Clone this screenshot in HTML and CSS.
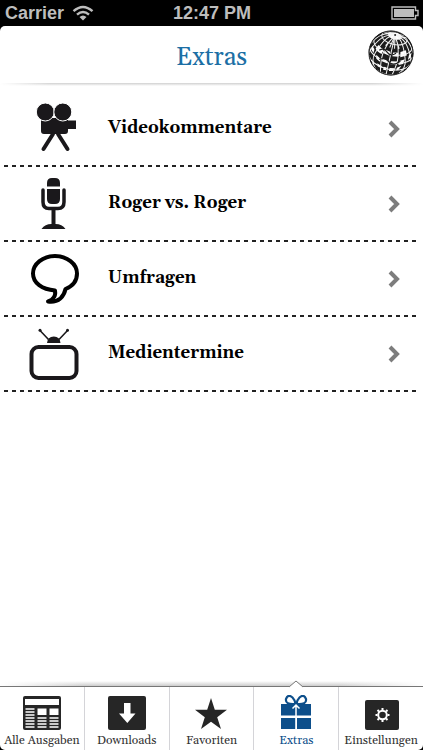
FILE: index.html
```
<!DOCTYPE html>
<html lang="de">

  <head>
    <meta charset="utf-8">
    <meta name="viewport" content="width=device-width, initial-scale=1">
    <title>Extras</title>
    <link rel="stylesheet" href="styles.css">
  </head>

  <body>
    <div class="status">
      <div class="carrier">
        <span>Carrier</span>
        <svg width="22" height="16" viewBox="0 0 22 16" fill="none" stroke="#bdbdbd" stroke-width="2.4">
          <path d="M1.500 6.200Q11-2.400 20.500 6.200"/>
          <path d="M5 9.600Q11 4.200 17 9.600"/>
          <path d="M7.500 12Q11 9 14.500 12L11 15.600z" fill="#bdbdbd" stroke="none"/>
        </svg>
      </div>
      <span class="time">12:47 PM</span>
      <svg class="battery" width="28" height="14" viewBox="0 0 28 14">
        <path d="M1 1H24.500V4.500H27V9.500H24.500V13H1z" fill="none" stroke="#bdbdbd" stroke-width="1.400"/>
        <rect x="3" y="3" width="20" height="8" fill="#bdbdbd"/>
      </svg>
    </div>

    <div class="app">
      <header class="header">
        <h1>Extras</h1>
        <svg class="globe" width="46" height="46" viewBox="-23 -23 46 46">
          <circle r="22.500" fill="#1c1c1c"/>
          <g transform="rotate(13)" fill="none" stroke="#f4f4f4">
            <!-- openings between the bars -->
            <g stroke="none" fill="#fff">
              <path d="M-14-5q4 3 6 3l-1 5q-5-1-7-4zM-6-2l5 1v4l-6-1zM2-1l5-1 1 4-6 1zM9-3l5-3 2 5-6 3zM-14 5l5 3v3l-4-2zM-7 7l6 1v3l-6-1zM2 8l6-1v3l-6 1zM10 6l5-3-1 5-4 2zM-11 13l5 2v2l-4-1zM-4 15h3v3h-3zM2 15l5-1-1 3-4 1zM9 13l4-3-2 5-2 1zM-20-3l3 3v4l-3-3zM18-2l2-3v5l-2 3z"/>
              <ellipse cy="-17.500" rx="7" ry="3.500"/>
            </g>
            <g stroke-width="1">
              <ellipse cy="-15.600" rx="12.900" ry="6.700"/>
              <path d="M-19.500-9A19.500 10.200 0 0 0 19.500-9M-22.200-1A22.300 11.600 0 0 0 22.200-1M-20.800 7A21 10.900 0 0 0 20.800 7M-15.900 13.500A15.900 8.300 0 0 0 15.900 13.500"/>
              <path d="M0-19V22M0-19Q6-16 9.100-10.900T15.300 3.100T11.200 19.400M0-19Q8-17 11.900-13T20-.5T18.800 12M0-19Q8-19 12.900-15.600T21.700-4.900M0-19L11.900-18.200M0-19L9-20.300"/>
              <path d="M0-19Q-6-16-9.100-10.900T-15.300 3.100T-11.200 19.400M0-19Q-8-17-11.900-13T-20-.5T-18.800 12M0-19Q-8-19-12.900-15.600T-21.700-4.900M0-19L-11.900-18.200M0-19L-9-20.300"/>
              <path d="M0-18L4.800-9.400Q8 0 8 6T6 21M0-18L-4.800-9.400Q-8 0-8 6T-6 21M0-18L2.500-5M0-18L-2.500-5M0-18L7-6M0-18L-7-6"/>
            </g>
            <path d="M-12 0Q-8-4-4 0T5-1M-10 9Q-5 5 0 9T11 6" stroke="#1c1c1c" stroke-width="1.200"/>
            <circle cy="-18.400" r="1" fill="#222" stroke="none"/>
          </g>
          <circle r="22" fill="none" stroke="#161616" stroke-width="1"/>
        </svg>
      </header>

      <main class="list">
        <a class="row" href="#">
          <svg class="icon" width="52" height="52" viewBox="0 0 52 52" fill="#1a181b">
            <path d="M13 15H40V17.500H48V26H40V28Q40 31 37 31H16Q13 31 13 28z"/>
            <circle cx="17.300" cy="9" r="9" stroke="#fff"/>
            <circle cx="34.800" cy="9" r="9" stroke="#fff"/>
            <path d="M25 31L15.500 46M30 31L39.500 46" stroke="#1a181b" stroke-width="4" stroke-linecap="round"/>
          </svg>
          <span class="title">Videokommentare</span>
          <svg class="arrow" width="14" height="20" viewBox="0 0 14 20"><path d="M3 3L10 10L3 17"/></svg>
        </a>
        <a class="row" href="#">
          <svg class="icon" width="52" height="52" viewBox="0 0 52 52" fill="#1a181b">
            <path d="M19 8.500V5Q19 0 24 0H27Q32 0 32 5V8.500zM19 11H32V21Q32 26 27 26H24Q19 26 19 21z"/>
            <path d="M15 12V24Q15 30.500 21 30.500H30Q36 30.500 36 24V12" fill="none" stroke="#1a181b" stroke-width="3.500" stroke-linecap="round"/>
            <path d="M23.500 31H27.500V46Q34 46 37.500 51H13.500Q17 46 23.500 46z"/>
          </svg>
          <span class="title">Roger vs. Roger</span>
          <svg class="arrow" width="14" height="20" viewBox="0 0 14 20"><path d="M3 3L10 10L3 17"/></svg>
        </a>
        <a class="row" href="#">
          <svg class="icon" width="52" height="52" viewBox="0 0 52 52" fill="none" stroke="#000" stroke-width="4" stroke-linejoin="round">
            <path d="M27 3C15 3 5 11 5 20.500C5 30 14 36.500 27 37.500C28 43 25 47 20 48.500C31 50 36 43 37.500 36C45 33 49 27 49 20.500C49 11 39 3 27 3z"/>
          </svg>
          <span class="title">Umfragen</span>
          <svg class="arrow" width="14" height="20" viewBox="0 0 14 20"><path d="M3 3L10 10L3 17"/></svg>
        </a>
        <a class="row" href="#">
          <svg class="icon" width="52" height="52" viewBox="0 0 52 52" fill="#1a181b">
            <path d="M12 2.500L20.500 11.500M39.500 2.500L31 11.500" stroke="#1a181b" stroke-width="1.600"/>
            <circle cx="12" cy="2.300" r="1.500"/>
            <circle cx="39.500" cy="2.300" r="1.500"/>
            <path d="M19 15Q19.500 8.500 25.800 8.500T32.500 15z"/>
            <rect x="3.500" y="19" width="45" height="31" rx="7" fill="none" stroke="#1a181b" stroke-width="4"/>
          </svg>
          <span class="title">Medientermine</span>
          <svg class="arrow" width="14" height="20" viewBox="0 0 14 20"><path d="M3 3L10 10L3 17"/></svg>
        </a>
      </main>

      <nav class="tabs">
        <a class="tab" href="#">
          <svg width="40" height="36" viewBox="0 0 40 36">
            <rect x="1" y="1" width="38" height="34" rx="2" fill="#262626"/>
            <path d="M3 4H37V10H3zM15.500 13.500H24.500V20H15.500zM27.500 13.500H36.500V20H27.500z" fill="#fff"/>
            <path d="M3.500 14H12.500M3.500 17H12.500M3.500 20H12.500M3.500 23H12.500M3.500 26H12.500M3.500 29H12.500M3.500 32H12.500M15.500 23H24.500M15.500 26H24.500M15.500 29H24.500M15.500 32H24.500M27.500 23H36.500M27.500 26H36.500M27.500 29H36.500M27.500 32H36.500" stroke="#fff" stroke-width="1.700"/>
          </svg>
          <span>Alle Ausgaben</span>
        </a>
        <a class="tab" href="#">
          <svg width="40" height="36" viewBox="0 0 40 36">
            <rect x="1" y="1" width="38" height="34" rx="2" fill="#262626"/>
            <path d="M17 8H23.500V18.500H28.500L20.300 28L12 18.500H17z" fill="#fff"/>
          </svg>
          <span>Downloads</span>
        </a>
        <a class="tab" href="#">
          <svg width="40" height="36" viewBox="0 0 40 36">
            <path d="M20 3L23.800 14.800H36L26.200 22.200L30 34L20 26.700L10 34L13.800 22.200L4 14.800H16.200z" fill="#262626"/>
          </svg>
          <span>Favoriten</span>
        </a>
        <a class="tab active" href="#">
          <svg class="pointer" width="14" height="8" viewBox="0 0 14 8"><path d="M0 7L7 1L14 7V8H0z" fill="#fff"/><path d="M0 7L7 1L14 7" fill="none" stroke="#777"/></svg>
          <svg width="40" height="36" viewBox="0 0 40 36">
            <path d="M5 9H35V20.500H5zM5 23H19.200V34H5zM21 23H35V34H21z" fill="#0d4f8b"/>
            <path d="M19.500 9Q9 10 10 4Q12-1.500 16.500 2.500Q19 5 19.500 9zM20.500 9Q31 10 30 4Q28-1.500 23.500 2.500Q21 5 20.500 9z" fill="#fff" stroke="#0d4f8b" stroke-width="2.200"/>
            <path d="M20 11V21M16.500 13.500L20 10L23.500 13.500" fill="none" stroke="#fff" stroke-width="1.500"/>
          </svg>
          <span>Extras</span>
        </a>
        <a class="tab" href="#">
          <svg width="40" height="36" viewBox="0 0 40 36">
            <rect x="4" y="5" width="34" height="30" rx="2" fill="#262626"/>
            <g transform="translate(21.500 20)">
              <circle r="4.300" fill="none" stroke="#fff" stroke-width="2"/>
              <path d="M0-5V-7M0 5V7M-5 0H-7M5 0H7M3.500-3.500L5-5M-3.500-3.500L-5-5M3.500 3.500L5 5M-3.500 3.500L-5 5" stroke="#fff" stroke-width="2"/>
            </g>
          </svg>
          <span>Einstellungen</span>
        </a>
      </nav>
    </div>
  </body>
</html>
```
FILE: styles.css
```
* {
  box-sizing: border-box;
}

body {
  margin: 0;
  min-height: 100vh;
  display: flex;
  flex-direction: column;
  background: #000;
  font-family: Georgia, Gelasio, "DejaVu Serif", serif;
}

a {
  color: inherit;
  text-decoration: none;
}

svg {
  flex-shrink: 0;
}

.status {
  display: grid;
  grid-template-columns: 1fr auto 1fr;
  align-items: center;
  height: 26px;
  padding: 0 4px 0 5px;
  color: #bdbdbd;
  font: bold 18px/26px "Liberation Sans", Arial, sans-serif;
}

.carrier {
  display: flex;
  align-items: center;
  gap: 8px;
}

.battery {
  justify-self: end;
}

.app {
  flex: 1;
  display: flex;
  flex-direction: column;
  background: #fff;
  border-radius: 5px;
}

.header {
  position: relative;
  height: 60px;
  padding-top: 17px;
  text-align: center;
}

.header::after {
  content: "";
  position: absolute;
  left: 0;
  right: 0;
  bottom: 0;
  height: 3px;
  background: linear-gradient(to right, #fff, transparent 12%, transparent 88%, #fff),
    linear-gradient(#d0d0d0, #fff);
}

.header h1 {
  margin: 0;
  color: #1c6fa5;
  font-size: 25px;
  font-weight: normal;
  line-height: 30px;
}

.globe {
  position: absolute;
  top: 4px;
  right: 9px;
}

.list {
  flex: 1;
  padding: 6px 4px 0;
}

.row {
  display: flex;
  align-items: center;
  height: 75px;
  padding: 0 18px 2px 24px;
  background: repeating-linear-gradient(to right, #222 0, #222 4px, transparent 4px, transparent 8px) bottom / 100% 2px no-repeat;
}

.icon {
  margin-right: 28px;
}

.title {
  flex: 1;
  color: #000;
  font-size: 17px;
  font-weight: bold;
  line-height: 24px;
  padding-bottom: 2px;
}

.arrow {
  fill: none;
  stroke: #7d7d7d;
  stroke-width: 4;
}

.tabs {
  position: relative;
  display: flex;
  height: 64px;
  border-top: 1px solid #777;
}

.tabs::before {
  content: "";
  position: absolute;
  left: 0;
  right: 0;
  top: -6px;
  height: 5px;
  background: linear-gradient(to right, #fff, transparent 20%, transparent 80%, #fff),
    linear-gradient(#fff, #ccc);
}

.tab {
  position: relative;
  flex: 1;
  display: flex;
  flex-direction: column;
  align-items: center;
  height: 63px;
  padding-top: 8px;
  border-right: 1px solid #d4d4d8;
  color: #333;
  font-size: 12px;
  line-height: 19px;
  white-space: nowrap;
}

.tab:last-child {
  border-right: none;
}

.active {
  color: #0d4f8b;
}

.pointer {
  position: absolute;
  top: -7px;
  left: calc(50% - 7px);
}
```
